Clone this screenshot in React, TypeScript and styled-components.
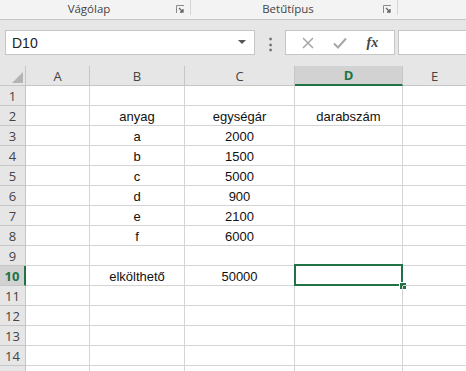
import styled, { createGlobalStyle } from 'styled-components';

const Global = createGlobalStyle`
  html, body {
    margin: 0;
    padding: 0;
    width: 466px;
    height: 371px;
    overflow: hidden;
    background: #ffffff;
  }
`;

const GREEN = '#217346';

export const Window = styled.div`
  width: 466px;
  height: 371px;
  overflow: hidden;
  font-family: "Open Sans", "Noto Sans", sans-serif;
`;

export const Ribbon = styled.div`
  display: flex;
  height: 20px;
  box-sizing: border-box;
  background: #f3f3f3;
  border-bottom: 1px solid #c6c6c6;
`;

export const Group = styled.div<{ $w: number }>`
  position: relative;
  width: ${(p) => p.$w}px;
  height: 15px;
  box-sizing: border-box;
  border-right: 1px solid #d4d4d4;
  display: flex;
  align-items: flex-end;
  justify-content: center;
  font-size: 11.5px;
  color: #444;
  line-height: 13px;
  padding-right: 12px;
`;

export const Launcher = styled.svg`
  position: absolute;
  right: 5px;
  bottom: 1px;
`;

export const FormulaBar = styled.div`
  display: flex;
  align-items: flex-start;
  height: 46px;
  box-sizing: border-box;
  padding: 10px 0 0 5px;
  background: #e6e6e6;
`;

export const NameBox = styled.div`
  width: 250px;
  height: 25px;
  box-sizing: border-box;
  background: #fff;
  border: 1px solid #c6c6c6;
  display: flex;
  align-items: center;
  justify-content: space-between;
  padding: 0 8px 0 6px;
  font-family: "Liberation Sans", Arial, sans-serif;
  font-size: 14px;
  color: #222;
`;

export const Dots = styled.div`
  width: 30px;
  height: 25px;
  display: flex;
  align-items: center;
  justify-content: center;
  color: #666;
  font-size: 15px;
  font-weight: bold;
`;

export const FxButtons = styled.div`
  width: 110px;
  height: 25px;
  box-sizing: border-box;
  background: #fff;
  border: 1px solid #c6c6c6;
  display: flex;
  align-items: center;
  justify-content: space-around;
  padding: 0 6px;
`;

export const Fx = styled.span`
  font-family: "Liberation Serif", "Times New Roman", serif;
  font-style: italic;
  font-weight: bold;
  font-size: 14px;
  color: #444;
`;

export const FormulaInput = styled.div`
  flex: 1;
  height: 25px;
  margin-left: 3px;
  box-sizing: border-box;
  background: #fff;
  border: 1px solid #c6c6c6;
  border-right: none;
`;

export const Sheet = styled.div`
  display: grid;
  grid-template-columns: 26px 64px 95px 110px 108px 64px;
  grid-auto-rows: 20px;
`;

export const Head = styled.div<{ $sel?: boolean; $row?: boolean }>`
  box-sizing: border-box;
  background: ${(p) => (p.$sel ? '#d2d2d2' : '#e6e6e6')};
  border-right: ${(p) => (p.$row && p.$sel ? `2px solid ${GREEN}` : '1px solid #c6c6c6')};
  border-bottom: ${(p) => (!p.$row && p.$sel ? `2px solid ${GREEN}` : '1px solid #c6c6c6')};
  display: flex;
  align-items: center;
  justify-content: center;
  font-size: 13px;
  color: ${(p) => (p.$sel ? GREEN : '#444')};
  font-weight: ${(p) => (p.$sel ? 700 : 400)};
`;

export const Corner = styled(Head)`
  position: relative;
  &::after {
    content: '';
    position: absolute;
    right: 2px;
    bottom: 2px;
    border-style: solid;
    border-width: 0 0 11px 11px;
    border-color: transparent transparent #b4b4b4 transparent;
  }
`;

export const Cell = styled.div`
  position: relative;
  box-sizing: border-box;
  border-right: 1px solid #d4d4d4;
  border-bottom: 1px solid #d4d4d4;
  display: flex;
  align-items: center;
  justify-content: center;
  font-family: "Liberation Sans", Arial, sans-serif;
  font-size: 13px;
  color: #111;
  padding-top: 1px;
`;

export const Selection = styled.div`
  position: absolute;
  top: -2px;
  left: -1px;
  right: -1px;
  bottom: -1px;
  border: 2px solid ${GREEN};
  &::after {
    content: '';
    position: absolute;
    right: -5px;
    bottom: -5px;
    width: 6px;
    height: 6px;
    background: ${GREEN};
    border-style: solid;
    border-color: #fff;
    border-width: 1px 0 0 1px;
  }
`;

const cols = ['A', 'B', 'C', 'D', 'E'];

const data: Record<number, string[]> = {
  2: ['', 'anyag', 'egységár', 'darabszám', ''],
  3: ['', 'a', '2000', '', ''],
  4: ['', 'b', '1500', '', ''],
  5: ['', 'c', '5000', '', ''],
  6: ['', 'd', '900', '', ''],
  7: ['', 'e', '2100', '', ''],
  8: ['', 'f', '6000', '', ''],
  10: ['', 'elkölthető', '50000', '', ''],
};

function LauncherIcon() {
  return (
    <Launcher width="9" height="9" viewBox="0 0 9 9">
      <path d="M0.5 8V0.5H8" fill="none" stroke="#8a8a8a" strokeWidth="1" />
      <path d="M3 3L7 7M7 4V7H4" fill="none" stroke="#666" strokeWidth="1.3" />
    </Launcher>
  );
}

export default function App(): JSX.Element {
  const rows = Array.from({ length: 15 }, (_, i) => i + 1);
  return (
    <Window>
      <Global />
      <Ribbon>
        <Group $w={191}>
          Vágólap
          <LauncherIcon />
        </Group>
        <Group $w={207}>
          Betűtípus
          <LauncherIcon />
        </Group>
      </Ribbon>
      <FormulaBar>
        <NameBox>
          D10
          <svg width="8" height="5" viewBox="0 0 8 5">
            <path d="M0 0H8L4 4Z" fill="#555" />
          </svg>
        </NameBox>
        <Dots>⋮</Dots>
        <FxButtons>
          <svg width="12" height="12" viewBox="0 0 12 12">
            <path d="M1 1L11 11M11 1L1 11" stroke="#a6a6a6" strokeWidth="1.5" />
          </svg>
          <svg width="14" height="12" viewBox="0 0 14 12">
            <path d="M1 6.5L5 10.5L13 1.5" fill="none" stroke="#a6a6a6" strokeWidth="2" />
          </svg>
          <Fx>fx</Fx>
        </FxButtons>
        <FormulaInput />
      </FormulaBar>
      <Sheet>
        <Corner />
        {cols.map((c) => (
          <Head key={c} $sel={c === 'D'}>
            {c}
          </Head>
        ))}
        {rows.map((r) => (
          <>
            <Head key={`h${r}`} $row $sel={r === 10}>
              {r < 15 ? r : ''}
            </Head>
            {cols.map((c, i) => (
              <Cell key={`${c}${r}`}>
                {data[r]?.[i] ?? ''}
                {r === 10 && c === 'D' && <Selection />}
              </Cell>
            ))}
          </>
        ))}
      </Sheet>
    </Window>
  );
}
